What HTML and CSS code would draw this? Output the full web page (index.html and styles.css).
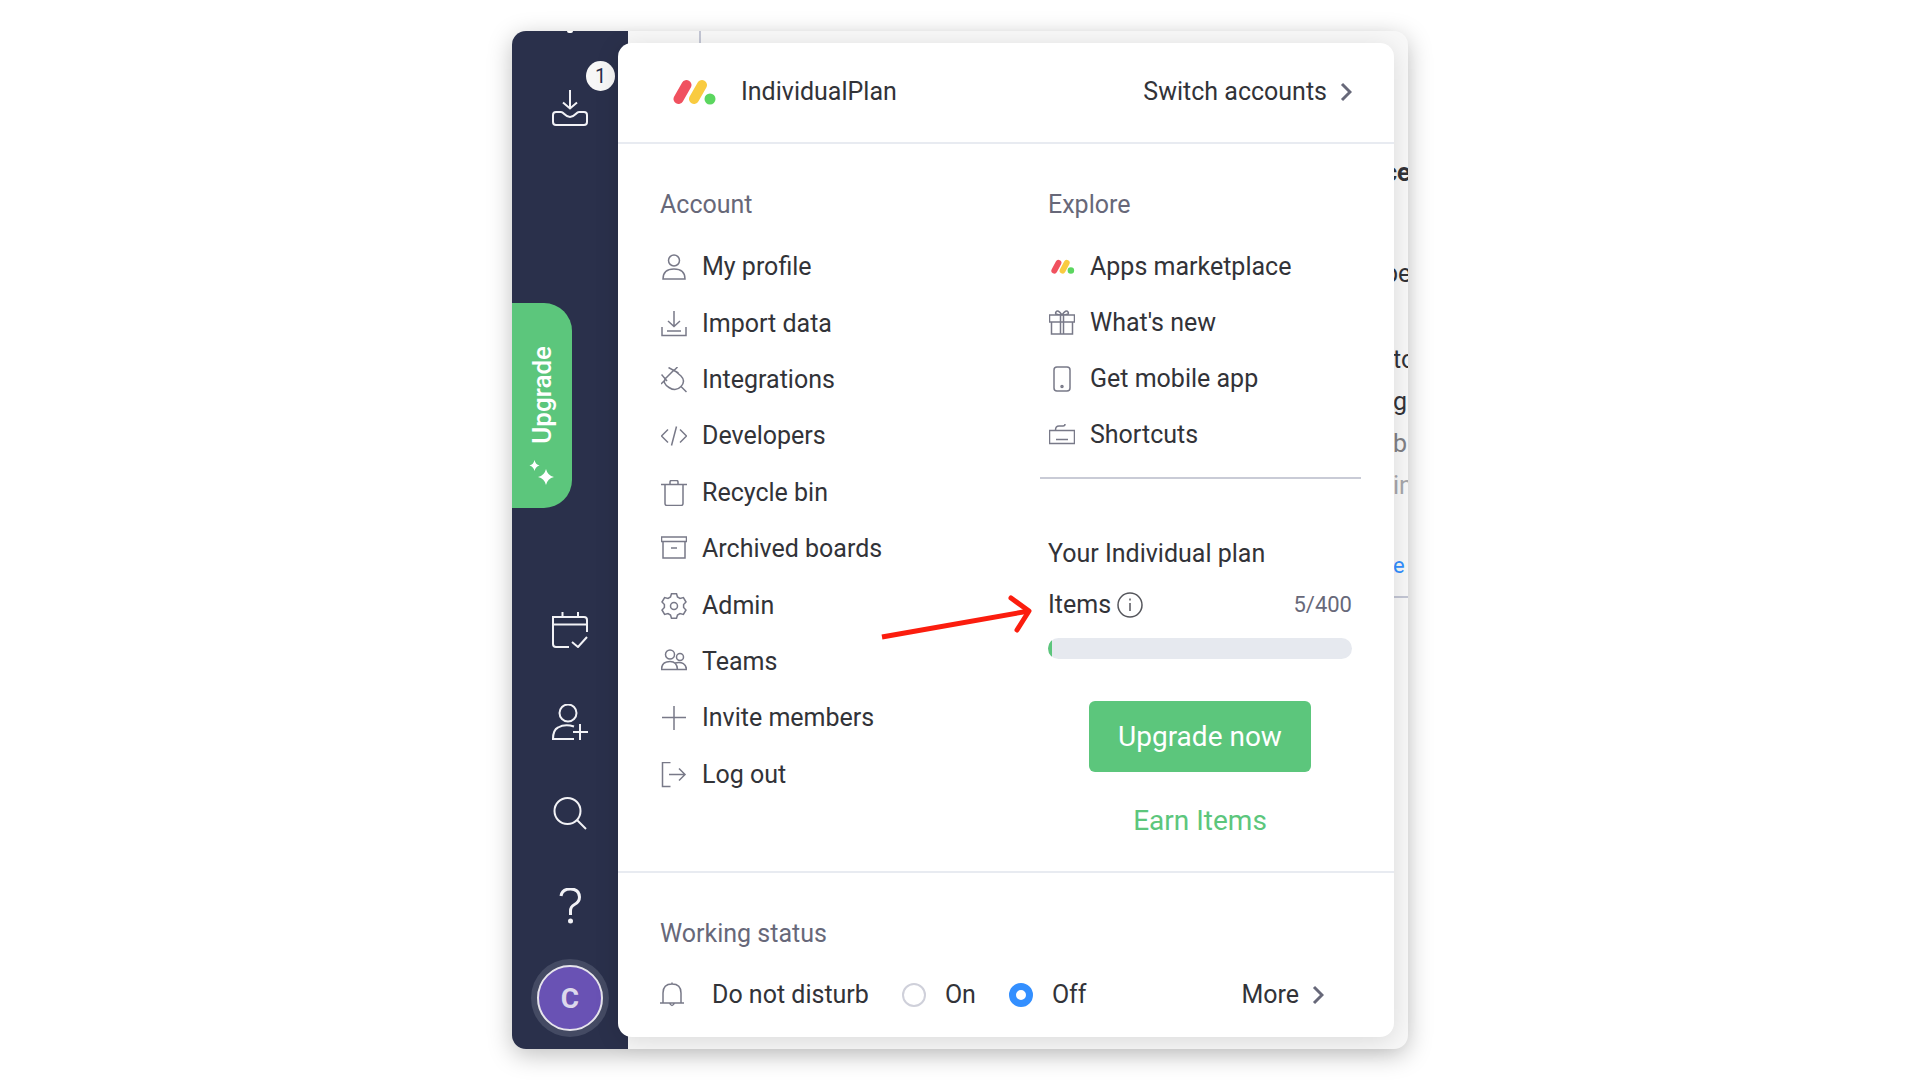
FILE: index.html
```html
<!DOCTYPE html>
<html lang="en">
<head>
  <meta charset="UTF-8" />
  <title>Account menu</title>
  <link rel="stylesheet" href="styles.css">
</head>
<body>
  <div class="window">
    <nav class="sidebar">
      <span class="notch"></span>
      <a class="inbox" href="#" aria-label="Inbox">
        <svg class="side-icon" viewBox="0 0 36 36"><path d="M18 0v18M11 12.500l7 6 7-6M4 22h5c3 0 4 5 9 5s6-5 9-5h5q3 0 3 3v7q0 3-3 3H4q-3 0-3-3v-7q0-3 3-3z"/></svg>
        <span class="badge">1</span>
      </a>
      <button class="upgrade-tab">
        <svg class="sparkles" viewBox="0 0 26 26"><path d="M17 9q1.500 6.500 8 8-6.500 1.500-8 8-1.500-6.500-8-8 6.500-1.500 8-8zM5.500 0q1 4.500 5 5.500-4 1-5 5.500-1-4.500-5-5.500 4-1 5-5.500z"/></svg>
        <span>Upgrade</span>
      </button>
      <div class="side-links">
        <a href="#" aria-label="My work"><svg class="side-icon" viewBox="0 0 36 36"><path d="M17 35H4q-3 0-3-3V5h31q3 0 3 3v12M1 12.500h34M10.500 0v5M26 0v5M20 30l6 5 9-10"/></svg></a>
        <a href="#" aria-label="Invite"><svg class="side-icon" viewBox="0 0 36 36"><circle cx="16" cy="9" r="8.500"/><path d="M22 35H1q0-9 5-11.500 7-4 16-1M28 20v16M21 28h15"/></svg></a>
        <a href="#" aria-label="Search"><svg class="side-icon" viewBox="0 0 36 36"><circle cx="15.500" cy="15" r="13"/><path d="M25 24l9 9"/></svg></a>
        <a href="#" aria-label="Help"><svg class="side-icon help" viewBox="0 0 36 36"><path d="M9 8q1-7 9.500-7t9 8q0 5-5 7.500-4 2-4 6.500v4"/><circle class="dot" cx="18.500" cy="33" r="2.500"/></svg></a>
        <a class="avatar" href="#">C</a>
      </div>
    </nav>

    <main class="page">
      <div class="page-rule"></div>
      <div class="page-text">
        <strong>ce</strong>
        <p class="intro">be</p>
        <p class="indent">to</p>
        <p class="indent">g</p>
        <p class="indent muted">b</p>
        <p class="indent faint">in</p>
        <a class="indent" href="#">e</a>
        <hr>
      </div>
    </main>

    <section class="menu">
      <header class="menu-header">
        <svg class="logo" viewBox="0 0 44 26"><path stroke="#f0515f" d="M6.500 20l8-14"/><path stroke="#f9cb40" d="M22 20l8-14"/><circle fill="#5bd65f" cx="38" cy="20" r="5.500"/></svg>
        <h1>IndividualPlan</h1>
        <a class="more-link" href="#">Switch accounts <svg class="chevron" viewBox="0 0 12 20"><path d="M2 2l8 8-8 8"/></svg></a>
      </header>

      <div class="menu-body">
        <div class="account">
          <h2>Account</h2>
          <ul>
            <li><a href="#"><svg class="icon" viewBox="0 0 26 26"><circle cx="13" cy="6.500" r="5.500"/><path d="M2 25q0-10 11-10t11 10z"/></svg>My profile</a></li>
            <li><a href="#"><svg class="icon" viewBox="0 0 26 26"><path d="M13 0v15M7 10l6 5.500 6-5.500M1 16v8.500h24V16M6 20h14"/></svg>Import data</a></li>
            <li><a href="#"><svg class="icon" viewBox="0 0 26 26"><path d="M4.500 11.500L13 3l7 6q5 5 0 10.500t-12 1-3.500-9M20 19.500l5.500 5.500M7.500 .500l10 5.500M16.500 0l-4 4M.500 7.500L6 14M0 17l5-5"/></svg>Integrations</a></li>
            <li><a href="#"><svg class="icon" viewBox="0 0 26 26"><path d="M7 6.500L.500 13 7 19.500M19 6.500l6.500 6.500-6.500 6.500M15.500 3.500l-5 19"/></svg>Developers</a></li>
            <li><a href="#"><svg class="icon" viewBox="0 0 26 26"><path d="M0 4.500h26M4 4.500v19q0 2 2 2h14q2 0 2-2v-19M9 4.500V2q0-1.500 1.500-1.500h5q1.500 0 1.500 1.500v2.500"/></svg>Recycle bin</a></li>
            <li><a href="#"><svg class="icon" viewBox="0 0 26 26"><path d="M.500 1h25v4.500H.500zM2 5.500V22h22V5.500M10 12h6"/></svg>Archived boards</a></li>
            <li><a href="#"><svg class="icon" viewBox="0 0 26 26"><circle cx="13" cy="13" r="3.500"/><path d="M10.500.700h5l1 3.300 2.500 1.400 3.400-.800 2.600 4.400-2.400 2.500v3l2.400 2.500-2.600 4.400-3.400-.800-2.500 1.400-1 3.300h-5l-1-3.300L7 20.600l-3.400.800L1 17l2.400-2.500v-3L1 9l2.600-4.400 3.400.800L9.500 4z"/></svg>Admin</a></li>
            <li><a href="#"><svg class="icon" viewBox="0 0 26 26"><circle cx="9" cy="5.500" r="4.500"/><circle cx="19" cy="8" r="3.500"/><path d="M.500 20.500q0-8 8.500-8 7 0 7.500 8zM14 14q11-2 11.500 6.500h-9"/></svg>Teams</a></li>
            <li><a href="#"><svg class="icon" viewBox="0 0 26 26"><path d="M13 1v24M1 12.500h24"/></svg>Invite members</a></li>
            <li><a href="#"><svg class="icon" viewBox="0 0 26 26"><path d="M9.500 .500H1.500v24h8M8 12.500h16M18 6.500l6 6-6 6"/></svg>Log out</a></li>
          </ul>
        </div>

        <div class="explore">
          <h2>Explore</h2>
          <ul>
            <li><a href="#"><svg class="icon mark" viewBox="0 0 44 44"><path stroke="#f0515f" d="M9 28l7-13"/><path stroke="#f9cb40" d="M23 28l7-13"/><circle fill="#5bd65f" cx="37" cy="28" r="5.500"/></svg>Apps marketplace</a></li>
            <li><a href="#"><svg class="icon" viewBox="0 0 26 26"><path d="M.500 5h25v7H.500zM2.500 12v12h21V12M11.500 5v19M14.500 5v19M13 5Q5 5 7 2t6 3q4-6 6-3t-6 3"/></svg>What's new</a></li>
            <li><a href="#"><svg class="icon" viewBox="0 0 26 26"><rect x="5" y="1" width="16" height="24" rx="3"/><circle cx="13" cy="20.500" r="1"/></svg>Get mobile app</a></li>
            <li><a href="#"><svg class="icon" viewBox="0 0 26 26"><path d="M.500 8.500h25v13H.500zM7 17.500h12M6.500 8q0-4 3.500-4h4q2 0 2-2"/></svg>Shortcuts</a></li>
          </ul>
          <div class="plan">
            <h3>Your Individual plan</h3>
            <div class="usage">
              <span id="items-label">Items</span>
              <svg class="info" viewBox="0 0 26 26"><circle cx="13" cy="13" r="12"/><path d="M13 11v8M13 6.500v2"/></svg>
              <span class="count">5/400</span>
            </div>
            <div class="bar" role="progressbar" aria-labelledby="items-label" aria-valuenow="5" aria-valuemax="400"><div class="bar-fill" style="width: 1.25%"></div></div>
            <button class="upgrade-now">Upgrade now</button>
            <a class="earn" href="#">Earn Items</a>
          </div>
        </div>
      </div>

      <footer class="menu-footer">
        <h2>Working status</h2>
        <div class="status">
          <svg class="icon bell" viewBox="0 0 26 26"><path d="M0 21h24M3 21V11q0-9 9-9t9 9v10M12 2V.500M9.500 21q2.500 5 5 0"/></svg>
          <span class="status-name">Do not disturb</span>
          <label><input type="radio" name="dnd">On</label>
          <label><input type="radio" name="dnd" checked>Off</label>
          <a class="more-link" href="#">More <svg class="chevron" viewBox="0 0 12 20"><path d="M2 2l8 8-8 8"/></svg></a>
        </div>
      </footer>

      <svg class="arrow" viewBox="0 0 160 50"><path d="M4 44l147-26"/><path class="head" d="M133 5l18 13-12 19"/></svg>
    </section>
  </div>
</body>
</html>
```

FILE: styles.css
```css
* {
  box-sizing: border-box;
}

body {
  margin: 0;
  padding: 31px 16px;
  background: #fff;
  color: #323338;
  font: 25px/28px Roboto, sans-serif;
}

h1, h2, h3, p, ul {
  margin: 0;
  padding: 0;
  font-size: inherit;
  font-weight: 400;
}

ul {
  list-style: none;
}

a {
  color: inherit;
  text-decoration: none;
}

button {
  border: none;
  font-family: inherit;
  color: #fff;
  background: #5cc67c;
  cursor: pointer;
}

svg {
  flex: none;
  fill: none;
}

.window {
  position: relative;
  display: flex;
  max-width: 896px;
  min-height: 1018px;
  margin: 0 auto;
  border-radius: 14px;
  background: #f8f8f8;
  box-shadow: 0 6px 24px rgba(0, 0, 0, 0.25);
}

/* left rail */
.sidebar {
  display: flex;
  flex-direction: column;
  align-items: center;
  width: 116px;
  border-radius: 14px 0 0 14px;
  background: #2a304b;
}

.notch {
  width: 6px;
  height: 2px;
  border-radius: 0 0 3px 3px;
  background: #fff;
}

.inbox {
  position: relative;
  margin-top: 57px;
  height: 36px;
}

.side-icon {
  width: 36px;
  height: 36px;
  stroke: #f2f2f6;
  stroke-width: 2;
}

.help {
  stroke-width: 3;
}

.side-icon .dot {
  fill: #f2f2f6;
  stroke: none;
}

.badge {
  position: absolute;
  top: -29px;
  left: 34px;
  width: 29px;
  height: 30px;
  border-radius: 50%;
  background: #f7f7f7;
  color: #292f4c;
  font-size: 20px;
  line-height: 30px;
  text-align: center;
}

.upgrade-tab {
  display: flex;
  align-items: center;
  align-self: flex-start;
  gap: 16px;
  width: 60px;
  height: 205px;
  margin-top: 177px;
  padding: 0 0 22px;
  border-radius: 0 28px 28px 0;
  font-size: 26px;
  font-weight: 500;
  writing-mode: vertical-rl;
  flex-direction: row-reverse;
}

.upgrade-tab span {
  transform: rotate(180deg);
}

.sparkles {
  width: 26px;
  height: 26px;
  fill: #fff;
}

.side-links {
  display: flex;
  flex-direction: column;
  align-items: center;
  gap: 56px;
  margin-top: 104px;
}

.side-links a {
  height: 36px;
}

.side-links .avatar {
  width: 66px;
  height: 66px;
  margin-top: -15px;
  border: 2px solid #e6e4ec;
  border-radius: 50%;
  background: #6952b4;
  box-shadow: 0 0 0 6px #444a63;
  color: #dcd8ec;
  font-size: 28px;
  font-weight: 700;
  line-height: 64px;
  text-align: center;
}

/* page behind the menu */
.page {
  display: flex;
  flex: 1;
  justify-content: space-between;
}

.page-rule {
  width: 2px;
  height: 40px;
  margin-left: 71px;
  background: #c3c6d4;
}

.page-text {
  width: 24px;
  padding-top: 128px;
  overflow: hidden;
}

.page-text .intro {
  margin: 73px 0 58px;
}

.page-text p {
  margin-bottom: 14px;
}

.page-text .indent {
  padding-left: 9px;
}

.muted {
  color: #808186;
}

.faint {
  color: #a6a7ab;
}

.page-text a {
  display: block;
  margin-top: 52px;
  color: #338fff;
  font-size: 22px;
}

.page-text hr {
  margin: 16px 0 0;
  border: none;
  border-top: 2px solid #c3c6d4;
}

/* account menu */
.menu {
  position: absolute;
  inset: 12px 14px 12px 106px;
  display: flex;
  flex-direction: column;
  border-radius: 14px;
  background: #fff;
  box-shadow: 0 4px 24px rgba(0, 0, 0, 0.12);
}

.menu-header {
  display: flex;
  align-items: center;
  height: 101px;
  padding: 0 42px 2px 54px;
  border-bottom: 2px solid #e8ebf1;
}

.menu-header h1 {
  margin-left: 25px;
}

.logo {
  width: 44px;
  height: 26px;
}

.logo path {
  stroke-width: 10;
  stroke-linecap: round;
}

.more-link {
  display: flex;
  align-items: center;
  gap: 13px;
  margin-left: auto;
}

.chevron {
  width: 12px;
  height: 20px;
  stroke: #676879;
  stroke-width: 3;
}

.menu-body {
  display: grid;
  grid-template-columns: 380px 1fr;
  padding: 47px 33px 34px 42px;
  border-bottom: 2px solid #e8ebf1;
}

h2 {
  color: #676879;
}

.menu-body ul {
  display: grid;
  grid-auto-rows: 56px;
  margin-top: 20px;
}

.menu-body li {
  display: flex;
  align-items: center;
}

.menu-body li a {
  display: flex;
  align-items: center;
  gap: 15px;
  padding-left: 1px;
}

.icon {
  width: 26px;
  height: 26px;
  stroke: #787988;
  stroke-width: 1.5;
}

.mark path {
  stroke-width: 10;
  stroke-linecap: round;
}

.mark circle {
  stroke: none;
}

.account {
  display: flex;
  flex-direction: column;
}

.menu-body .account ul {
  flex: 1;
  grid-auto-rows: 1fr;
  margin-bottom: 34px;
}

.explore h2,
.explore ul,
.plan {
  padding: 0 9px 0 8px;
}

.explore ul {
  padding-bottom: 14px;
  border-bottom: 2px solid #c9cbd6;
}

.plan {
  display: flex;
  flex-direction: column;
  padding-top: 61px;
}

.usage {
  display: flex;
  align-items: center;
  gap: 6px;
  margin-top: 23px;
}

.info {
  width: 26px;
  height: 26px;
  stroke: #55565c;
  stroke-width: 1.5;
}

.count {
  margin-left: auto;
  color: #676879;
  font-size: 22px;
}

.bar {
  height: 21px;
  margin-top: 19px;
  border-radius: 11px;
  background: #e6e9ef;
  overflow: hidden;
}

.bar-fill {
  height: 100%;
  background: #5cc67c;
}

.upgrade-now {
  align-self: center;
  height: 71px;
  margin-top: 42px;
  padding: 0 29px;
  border-radius: 6px;
  font-size: 28px;
}

.earn {
  align-self: center;
  margin-top: 33px;
  color: #5cc67c;
  font-size: 28px;
  line-height: 32px;
}

.menu-footer {
  padding: 47px 70px 28px 42px;
}

.status {
  display: flex;
  align-items: center;
  margin-top: 33px;
}

.status-name {
  margin-left: 26px;
}

.status label {
  display: flex;
  align-items: center;
  gap: 19px;
  margin-left: 33px;
}

.status input {
  appearance: none;
  width: 24px;
  height: 24px;
  margin: 0;
  border: 2px solid #cfd0da;
  border-radius: 50%;
}

.status input:checked {
  border: 7px solid #338fff;
}

/* callout pointing at the items counter */
.arrow {
  position: absolute;
  top: 550px;
  left: 260px;
  width: 160px;
  height: 50px;
  stroke: #fb1d0e;
  stroke-width: 5;
}

.arrow .head {
  stroke-linecap: round;
  stroke-linejoin: round;
}
```
